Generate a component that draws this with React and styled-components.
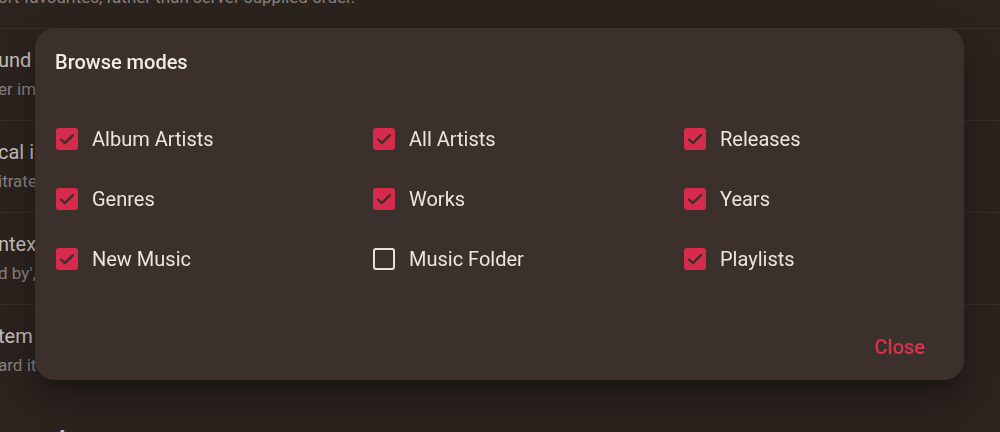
import React, { useState } from "react";
import styled, { createGlobalStyle } from "styled-components";

const GlobalStyle = createGlobalStyle`
  html, body {
    margin: 0;
    padding: 0;
    background: #2e2520;
    overflow: hidden;
  }
  body {
    font-family: Roboto, "Noto Sans", "Liberation Sans", sans-serif;
    -webkit-font-smoothing: antialiased;
  }
`;

const modes = [
  { id: "albumartists", label: "Album Artists", on: true },
  { id: "artists", label: "All Artists", on: true },
  { id: "releases", label: "Releases", on: true },
  { id: "genres", label: "Genres", on: true },
  { id: "works", label: "Works", on: true },
  { id: "years", label: "Years", on: true },
  { id: "newmusic", label: "New Music", on: true },
  { id: "folder", label: "Music Folder", on: false },
  { id: "playlists", label: "Playlists", on: true },
];

// settings rows sitting behind the dialog, scrolled partly out of view
const settings = [
  { title: "", sub: "ort favourites, rather than server supplied order." },
  { title: "und", sub: "er image as background" },
  { title: "cal information", sub: "itrate and sample rate" },
  { title: "ntext menu", sub: "d by', 'Composer'" },
  { title: "tem", sub: "ard items" },
];

const Page = styled.div`
  width: 1000px;
  height: 432px;
  overflow: hidden;
`;

const SettingsList = styled.div`
  margin-top: -63px;
  margin-left: -2px;
`;

const SettingRow = styled.div`
  padding: 19px 0 21px;
  border-bottom: ${(p) => (p.$last ? "none" : "1px solid #3a302b")};
  white-space: nowrap;
`;

const SettingTitle = styled.div`
  font-size: 20px;
  line-height: 24px;
  height: 24px;
  color: #cfc9c5;
`;

const SettingSub = styled.div`
  margin-top: 7px;
  font-size: 17px;
  line-height: 20px;
  color: #908884;
`;

const SectionHeading = styled.h2`
  margin: 27px 0 0 55px;
  font-size: 22px;
  font-weight: 500;
  line-height: 32px;
  color: #d6d0cc;
`;

const Scrim = styled.div`
  position: fixed;
  inset: 0;
  background: rgba(0, 0, 0, 0.04);
`;

const Dialog = styled.div`
  position: fixed;
  left: 35px;
  top: 28px;
  width: 929px;
  height: 352px;
  box-sizing: border-box;
  display: flex;
  flex-direction: column;
  background: #3b302c;
  border-radius: 20px;
  box-shadow: 0 11px 15px -7px rgba(0, 0, 0, 0.25),
    0 24px 38px 3px rgba(0, 0, 0, 0.16), 0 9px 46px 8px rgba(0, 0, 0, 0.14);
`;

const DialogTitle = styled.div`
  padding: 18px 20px 0;
  font-size: 20px;
  font-weight: 500;
  line-height: 32px;
  color: #f2ece8;
`;

const ModeGrid = styled.div`
  display: grid;
  grid-template-columns: 317px 311px 1fr;
  grid-auto-rows: 60px;
  align-items: center;
  padding: 31px 21px 0;
`;

const ModeOption = styled.label`
  display: flex;
  align-items: center;
  gap: 14px;
  cursor: pointer;
  font-size: 20px;
  color: #ebe5e1;
  user-select: none;
`;

const Box = styled.span`
  width: 22px;
  height: 22px;
  flex: none;
  box-sizing: border-box;
  border-radius: 3px;
  display: flex;
  align-items: center;
  justify-content: center;
  background: ${(p) => (p.$checked ? "#d72a4c" : "transparent")};
  border: ${(p) => (p.$checked ? "none" : "2px solid #e8e2de")};
`;

const Actions = styled.div`
  margin-top: auto;
  display: flex;
  justify-content: flex-end;
  padding: 0 31px 15px;
`;

const TextButton = styled.button`
  height: 36px;
  padding: 0 8px;
  border: none;
  background: none;
  font-family: inherit;
  font-size: 20px;
  font-weight: 500;
  color: #d8324f;
  cursor: pointer;
`;

const Check = ({ checked }) => (
  <Box $checked={checked}>
    {checked && (
      <svg width="20" height="20" viewBox="0 0 24 24">
        <path
          d="M4.8 12.6l4.6 4.4L19.2 7.4"
          fill="none"
          stroke="#3b302c"
          strokeWidth="2.8"
          strokeLinecap="round"
          strokeLinejoin="round"
        />
      </svg>
    )}
  </Box>
);

export default function App() {
  const [state, setState] = useState(() =>
    Object.fromEntries(modes.map((m) => [m.id, m.on]))
  );

  const toggle = (id) => setState((s) => ({ ...s, [id]: !s[id] }));

  return (
    <Page>
      <GlobalStyle />
      <SettingsList>
        {settings.map((s, i) => (
          <SettingRow key={i} $last={i === settings.length - 1}>
            <SettingTitle>{s.title}</SettingTitle>
            <SettingSub>{s.sub}</SettingSub>
          </SettingRow>
        ))}
      </SettingsList>
      <SectionHeading>Appearance</SectionHeading>
      <Scrim />
      <Dialog>
        <DialogTitle>Browse modes</DialogTitle>
        <ModeGrid>
          {modes.map((m) => (
            <ModeOption key={m.id} onClick={() => toggle(m.id)}>
              <Check checked={state[m.id]} />
              {m.label}
            </ModeOption>
          ))}
        </ModeGrid>
        <Actions>
          <TextButton>Close</TextButton>
        </Actions>
      </Dialog>
    </Page>
  );
}
